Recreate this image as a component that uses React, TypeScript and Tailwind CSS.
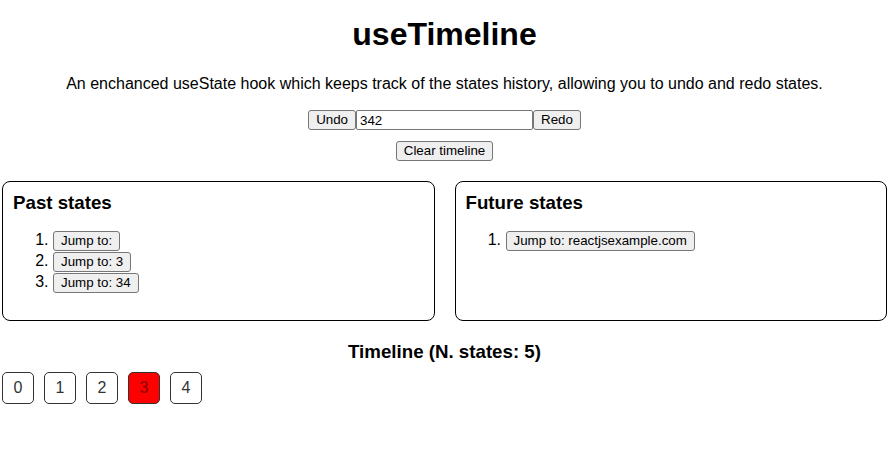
import React, { useState } from 'react';

const btn =
  'bg-[#efefef] border border-[#767676] rounded-[3px] px-[7px] py-[1px] text-[13.33px] leading-[16px] text-black';

export default function App() {
  const [value, setValue] = useState('342');
  const past = ['', '3', '34'];
  const future = ['reactjsexample.com'];
  const timeline = [0, 1, 2, 3, 4];
  const current = 3;

  return (
    <div className="font-['Liberation_Sans',Arial,sans-serif] text-black bg-white min-h-[452px] pl-[2px] pr-[4px]">
      <h1 className="text-[32px] font-bold text-center leading-[37px] pt-[16px]">useTimeline</h1>
      <p className="text-[16px] text-center leading-[18px] mt-[22px]">
        An enchanced useState hook which keeps track of the states history, allowing you to undo and redo states.
      </p>

      <div className="flex justify-center items-center mt-[17px] h-[20px]">
        <button className={btn}>Undo</button>
        <input
          value={value}
          onChange={(e) => setValue(e.target.value)}
          className="w-[177px] h-[20px] border border-[#767676] rounded-[2px] px-[3px] text-[13.33px] text-black outline-none"
        />
        <button className={btn}>Redo</button>
      </div>

      <div className="flex justify-center mt-[11px]">
        <button className={btn}>Clear timeline</button>
      </div>

      <div className="grid grid-cols-2 gap-[20px] mt-[20px]">
        <div className="border border-black rounded-[8px] px-[10px] pt-[10px] pb-[28px]">
          <h3 className="text-[18.72px] font-bold leading-[21px]">Past states</h3>
          <ol className="list-decimal pl-[40px] mt-[16px] text-[16px] leading-[21px]">
            {past.map((s, i) => (
              <li key={i} className="h-[21px]">
                <button className={btn}>Jump to: {s}</button>
              </li>
            ))}
          </ol>
        </div>
        <div className="border border-black rounded-[8px] px-[10px] pt-[10px] pb-[28px]">
          <h3 className="text-[18.72px] font-bold leading-[21px]">Future states</h3>
          <ol className="list-decimal pl-[40px] mt-[16px] text-[16px] leading-[21px]">
            {future.map((s, i) => (
              <li key={i} className="h-[21px]">
                <button className={btn}>Jump to: {s}</button>
              </li>
            ))}
          </ol>
        </div>
      </div>

      <h3 className="text-[18.72px] font-bold leading-[21px] text-center mt-[20px]">
        Timeline (N. states: {timeline.length})
      </h3>
      <div className="flex gap-[10px] mt-[10px]">
        {timeline.map((t) => (
          <button
            key={t}
            className={`w-[32px] h-[32px] border border-[#333] rounded-[5px] text-[16px] ${
              t === current ? 'bg-[#ff0000] text-[#800]' : 'bg-white text-[#333]'
            }`}
          >
            {t}
          </button>
        ))}
      </div>
    </div>
  );
}
